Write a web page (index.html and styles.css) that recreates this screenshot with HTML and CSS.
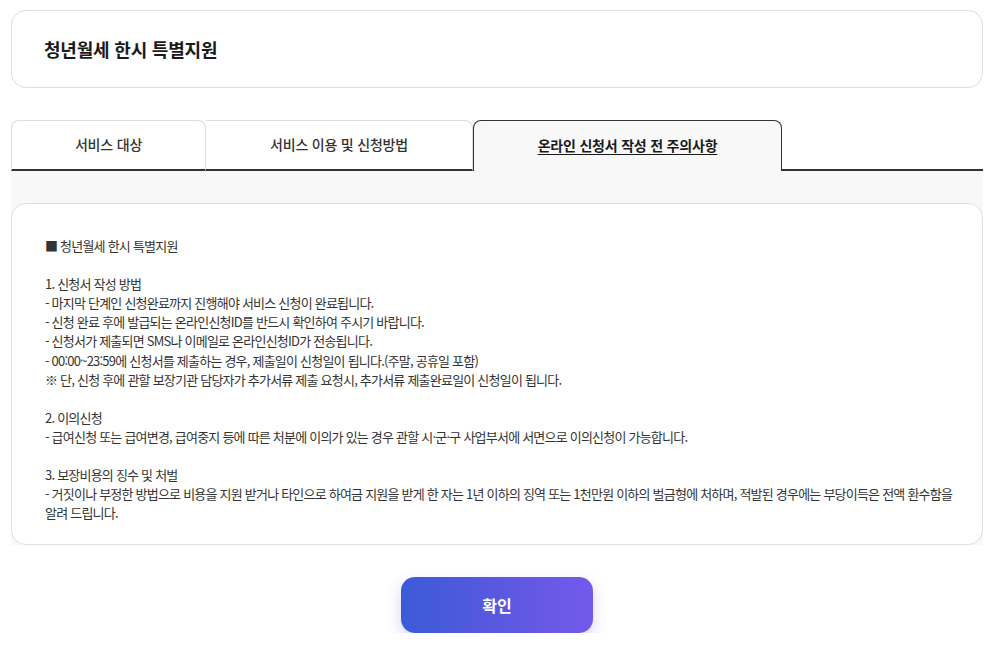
FILE: index.html
```html
<!DOCTYPE html>
<html lang="ko">
<head>
<meta charset="utf-8">
<title>청년월세 한시 특별지원</title>
<link rel="stylesheet" href="styles.css">
</head>
<body>
<div class="page">
  <div class="title-card">
    <h1 class="title">청년월세 한시 특별지원</h1>
  </div>

  <div class="tabs">
    <div class="tab tab-1">서비스 대상</div>
    <div class="tab tab-2">서비스 이용 및 신청방법</div>
    <div class="tab tab-3 active"><span>온라인 신청서 작성 전 주의사항</span></div>
    <div class="tab-rest"></div>
  </div>

  <div class="panel">
    <div class="content-card">
      <p class="line">■ 청년월세 한시 특별지원</p>
      <p class="line blank">&nbsp;</p>
      <p class="line">1. 신청서 작성 방법</p>
      <p class="line">- 마지막 단계인 신청완료까지 진행해야 서비스 신청이 완료됩니다.</p>
      <p class="line">- 신청 완료 후에 발급되는 온라인신청ID를 반드시 확인하여 주시기 바랍니다.</p>
      <p class="line">- 신청서가 제출되면 SMS나 이메일로 온라인신청ID가 전송됩니다.</p>
      <p class="line">- 00:00~23:59에 신청서를 제출하는 경우, 제출일이 신청일이 됩니다.(주말, 공휴일 포함)</p>
      <p class="line">※ 단, 신청 후에 관할 보장기관 담당자가 추가서류 제출 요청시, 추가서류 제출완료일이 신청일이 됩니다.</p>
      <p class="line blank">&nbsp;</p>
      <p class="line">2. 이의신청</p>
      <p class="line">- 급여신청 또는 급여변경, 급여중지 등에 따른 처분에 이의가 있는 경우 관할 시·군·구 사업부서에 서면으로 이의신청이 가능합니다.</p>
      <p class="line blank">&nbsp;</p>
      <p class="line">3. 보장비용의 징수 및 처벌</p>
      <p class="line">- 거짓이나 부정한 방법으로 비용을 지원 받거나 타인으로 하여금 지원을 받게 한 자는 1년 이하의 징역 또는 1천만원 이하의 벌금형에 처하며, 적발된 경우에는 부당이득은 전액 환수함을 알려 드립니다.</p>
    </div>
  </div>

  <div class="actions">
    <button class="confirm" type="button">확인</button>
  </div>
</div>
</body>
</html>
```

FILE: styles.css
```css
* { box-sizing: border-box; }
html, body { margin: 0; padding: 0; background: #fff; }
body {
  font-family: "Noto Sans CJK KR", "Noto Sans", sans-serif;
  color: #222;
}
.page {
  padding: 10px 13px 0 11px;
}
.title-card {
  height: 78px;
  border: 1px solid #dedede;
  border-radius: 15px;
  display: flex;
  align-items: center;
  padding: 0 32px;
}
.title {
  margin: 0;
  font-size: 18px;
  font-weight: 700;
  color: #1a1a1a;
  letter-spacing: -0.2px;
}
.tabs {
  margin-top: 32px;
  display: flex;
  align-items: stretch;
  height: 51px;
}
.tab {
  display: flex;
  align-items: center;
  justify-content: center;
  font-size: 14px;
  font-weight: 500;
  color: #333;
  background: #fff;
  border: 1px solid #dcdcdc;
  border-bottom: 2px solid #333;
  border-radius: 8px 8px 0 0;
  padding-bottom: 2px;
  letter-spacing: -0.2px;
}
.tab-1 { width: 195px; }
.tab-2 { width: 267px; border-left: none; border-radius: 0 8px 0 0; }
.tab-3 {
  width: 309px;
  background: #f8f8f8;
  border: 1px solid #333;
  border-bottom: none;
  font-weight: 700;
  color: #1a1a1a;
}
.tab-3 span {
  text-decoration: underline;
  text-underline-offset: 3px;
}
.tab-rest {
  flex: 1;
  border-bottom: 2px solid #333;
}
.panel {
  background: #f8f8f8;
  padding-top: 32px;
}
.content-card {
  background: #fff;
  border: 1px solid #e0e0e0;
  border-radius: 15px;
  padding: 32px 24px 22px 33px;
}
.line {
  margin: 0;
  font-size: 13px;
  line-height: 19.1px;
  color: #333;
  letter-spacing: -0.78px;
  word-break: keep-all;
}
.actions {
  display: flex;
  justify-content: center;
  padding-top: 32px;
}
.confirm {
  width: 192px;
  height: 56px;
  border: none;
  border-radius: 14px;
  background: linear-gradient(90deg, #3b5bd9 0%, #5a58e0 50%, #7459ec 100%);
  color: #fff;
  font-family: "Noto Sans CJK KR", "Noto Sans", sans-serif;
  font-size: 16px;
  font-weight: 700;
  box-shadow: 0 6px 14px rgba(90, 80, 220, 0.25);
  cursor: pointer;
}
```
